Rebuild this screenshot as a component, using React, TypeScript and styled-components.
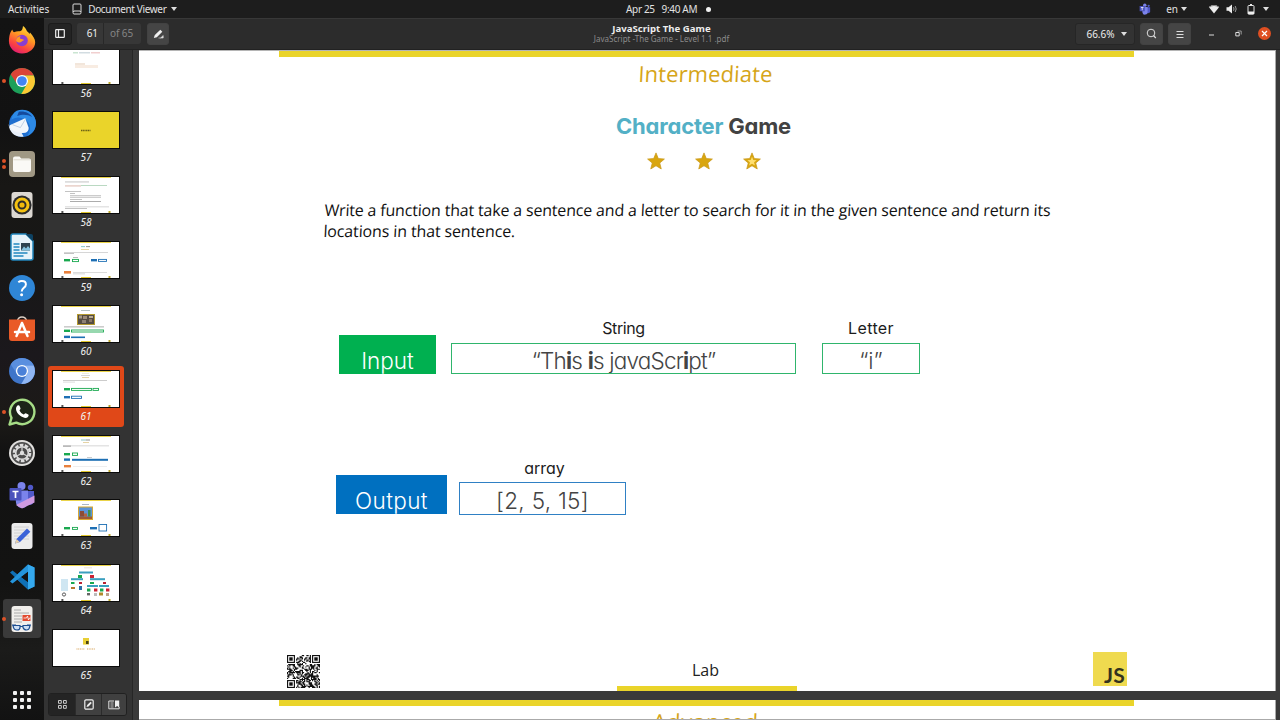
import React from "react";
import styled, { createGlobalStyle } from "styled-components";

const UI = `"Noto Sans", "Open Sans", sans-serif`;
const ERAS = `"Open Sans", "Noto Sans", sans-serif`;
const GOTHIC = `Inter, "Liberation Sans", sans-serif`;

const Global = createGlobalStyle`
  * { box-sizing: border-box; }
  body { margin: 0; overflow: hidden; background: #1d1d1d; }
  svg { display: block; flex: none; }
`;

const Desktop = styled.div`
  width: 1280px;
  height: 720px;
  display: grid;
  grid-template: 18px 702px / 44px 1236px;
  font-family: ${UI};
  overflow: hidden;
`;

/* ---------- top bar ---------- */
const TopBar = styled.header`
  grid-column: 1 / 3;
  display: flex;
  align-items: center;
  background: #1d1d1d;
  color: #e2e2e2;
  font-size: 10px;
  line-height: 18px;
  white-space: pre;
`;
const TopLeft = styled.div`
  width: 626px;
  padding-left: 8px;
  display: flex;
  align-items: center;
`;
const TopText = styled.span<{ $ls?: number; $ml?: number }>`
  letter-spacing: ${(p) => p.$ls ?? 0}px;
  margin-left: ${(p) => p.$ml ?? 0}px;
`;
const Caret = styled.i<{ $ml?: number }>`
  margin-left: ${(p) => p.$ml ?? 6}px;
  border: 3.2px solid transparent;
  border-top: 4px solid #dedede;
  border-bottom: 0;
`;
const Dot = styled.i`
  width: 5px;
  height: 5px;
  margin-left: 9px;
  border-radius: 50%;
  background: #f2f2f2;
`;
const Tray = styled.div`
  margin-left: auto;
  padding-right: 11px;
  display: flex;
  align-items: center;
`;
const TrayIcons = styled.div`
  margin: 0 8px 0 21px;
  display: flex;
  align-items: center;
  gap: 6px;
  svg + svg + svg { margin-left: 3px; }
`;

/* ---------- dock ---------- */
const DockBar = styled.nav`
  display: flex;
  flex-direction: column;
  align-items: center;
  padding-top: 1.5px;
  background: linear-gradient(#131313 0, #121212 16%, #181715 24%, #171716 34%, #1b181c 48%, #1c1a17 57%, #121212 62%, #131312 80%, #1b1b1a 90%, #121212 100%);
`;
const Slot = styled.div<{ $on?: boolean }>`
  position: relative;
  width: 38px;
  height: 39px;
  margin: 1.16px 0;
  display: grid;
  place-items: center;
  border-radius: 3px;
  background: ${(p) => (p.$on ? "#3a3a3a" : "transparent")};
`;
const Running = styled.span`
  position: absolute;
  left: -1px;
  top: 0;
  height: 100%;
  display: flex;
  flex-direction: column;
  justify-content: center;
  gap: 1.5px;
`;
const Pip = styled.i`
  width: 4px;
  height: 4px;
  border-radius: 50%;
  background: #dc5227;
`;
const Apps = styled.div`
  margin-top: auto;
  margin-bottom: 11px;
  display: grid;
  grid-template-columns: repeat(3, 4px);
  gap: 3px;
  i { width: 4px; height: 4px; border-radius: 1px; background: #f1f1f1; }
`;

/* ---------- window ---------- */
const Window = styled.main`
  display: grid;
  grid-template: 32px 670px / 88px 1148px;
`;
const HeaderBar = styled.div`
  grid-column: 1 / 3;
  display: grid;
  grid-template-columns: 1fr auto 1fr;
  align-items: center;
  background: #2c2c2c;
  border-top: 1px solid #383838;
  border-bottom: 1px solid #222;
  color: #eee;
`;
const Tools = styled.div<{ $end?: boolean }>`
  display: flex;
  align-items: center;
  justify-content: ${(p) => (p.$end ? "flex-end" : "flex-start")};
  padding: ${(p) => (p.$end ? "0 9px 1px 0" : "0 0 1px 4px")};
`;
const Tool = styled.button<{ $w: number; $dark?: boolean; $ml?: number }>`
  width: ${(p) => p.$w}px;
  height: 22px;
  margin: 0 0 0 ${(p) => p.$ml ?? 5}px;
  padding: 0;
  display: flex;
  align-items: center;
  justify-content: center;
  border: 1px solid ${(p) => (p.$dark ? "#1c1c1c" : "#424242")};
  border-radius: 3px;
  background: ${(p) => (p.$dark ? "#242424" : "#454545")};
  color: #eee;
  font: 10px/20px ${UI};
`;
const PageBox = styled.div`
  width: 64px;
  height: 21px;
  margin-left: 5px;
  display: flex;
  border-radius: 3px;
  background: #373737;
  color: #858585;
  font-size: 10px;
  line-height: 21px;
  overflow: hidden;
  letter-spacing: -0.1px;
`;
const PageNo = styled.span`
  width: 27px;
  padding-right: 5px;
  text-align: right;
  color: #eee;
  border-right: 1px solid #282828;
`;
const PageOf = styled.span`
  padding-left: 6px;
  white-space: pre;
`;
const ZoomBox = styled(Tool)`
  background: #333;
  border-color: #262626;
  padding-left: 3px;
`;
const Titles = styled.div`
  text-align: center;
  padding: 0 1px 1px 0;
`;
const WinTitle = styled.div`
  font-weight: 700;
  font-size: 9.6px;
  line-height: 11px;
  letter-spacing: 0.02px;
`;
const WinSub = styled.div`
  font-size: 8px;
  line-height: 10px;
  color: #8b8b8b;
  white-space: pre;
`;
const WinButton = styled.span<{ $ml: number; $close?: boolean }>`
  width: 13px;
  height: 13px;
  margin-left: ${(p) => p.$ml}px;
  display: grid;
  place-items: center;
  border-radius: 50%;
  background: ${(p) => (p.$close ? "#df4f22" : "transparent")};
`;

/* ---------- sidebar ---------- */
const Sidebar = styled.aside`
  display: flex;
  flex-direction: column;
  background: #333;
  height: 670px;
`;
const Thumbs = styled.div`
  height: 639px;
  overflow: hidden;
  padding: 0 8px 0 4px;
`;
const Cell = styled.figure<{ $on?: boolean }>`
  height: 60.7px;
  margin: 0 0 4px;
  padding-top: 4px;
  display: flex;
  flex-direction: column;
  align-items: center;
  border-radius: 3px;
  background: ${(p) => (p.$on ? "#e04818" : "transparent")};
  &:first-child { margin-top: -7.5px; }
  svg { border: 1px solid #0b0b0b; }
`;
const CellNo = styled.figcaption`
  margin-top: 1px;
  font: italic 10px/14px ${UI};
  color: #f0f0f0;
`;
const SideTabs = styled.div`
  height: 23px;
  margin: 4px 5px 0 4px;
  display: grid;
  grid-template-columns: 26px 26px 1fr;
  border: 1px solid #202020;
  border-radius: 3px;
  overflow: hidden;
`;
const SideTab = styled.button<{ $on?: boolean }>`
  display: grid;
  place-items: center;
  padding: 0;
  border: 0;
  border-left: ${(p) => (p.$on ? "0" : "1px solid #2b2b2b")};
  background: ${(p) => (p.$on ? "#242424" : "#404040")};
`;

/* ---------- document ---------- */
const Viewer = styled.section`
  height: 670px;
  padding-left: 6px;
  border-left: 1px solid #262626;
  background: #3a3a3a;
  overflow: hidden;
`;
const Page = styled.article<{ $h: number }>`
  width: 1137px;
  height: ${(p) => p.$h}px;
  padding: 0 141px 0 140px;
  display: flex;
  flex-direction: column;
  overflow: hidden;
  background: #fff;
  border-top: 1px solid #b5b5b5;
  border-right: 1px solid #aaa;
  & + & { margin-top: 9px; border-bottom: 1px solid #aaa; border-top: 0; }
`;
const Stripe = styled.div`
  flex: none;
  width: 855px;
  height: 6px;
  background: #ead42a;
`;
const Level = styled.div<{ $mt: number; $ls?: number }>`
  margin-top: ${(p) => p.$mt}px;
  height: 24px;
  flex: none;
  text-align: center;
  padding-right: 2px;
  font: 400 22px/24px ${ERAS};
  letter-spacing: ${(p) => p.$ls ?? 0}px;
  color: #d6a518;
  transform: skewX(-3deg);
`;
const Heading = styled.h1`
  margin: 27px 0 0;
  padding-right: 6px;
  text-align: center;
  font: 700 22px/28px ${GOTHIC};
  font-feature-settings: "cv11";
  letter-spacing: -0.2px;
  color: #424242;
  span { color: #53b0c6; }
`;
const Stars = styled.div`
  margin-top: 11px;
  padding-right: 5px;
  display: flex;
  justify-content: center;
  gap: 30px;
  height: 20px;
  align-items: center;
`;
const Prompt = styled.p`
  margin: 29px 0 0;
  padding-left: 45px;
  font: 400 16px/20.5px ${ERAS};
  color: #111;
  white-space: nowrap;
  transform: skewX(-3deg);
`;
const Line = styled.span<{ $ls: number }>`
  display: block;
  letter-spacing: ${(p) => p.$ls}px;
`;
const IORow = styled.div<{ $mt: number; $ml: number; $gap: number }>`
  margin: ${(p) => p.$mt}px 0 0 ${(p) => p.$ml}px;
  display: flex;
  align-items: flex-end;
  gap: ${(p) => p.$gap}px;
`;
const Tag = styled.div<{ $w: number; $c: string; $ls?: number; $mb?: number }>`
  width: ${(p) => p.$w}px;
  height: 39px;
  margin-bottom: ${(p) => p.$mb ?? 0}px;
  padding-top: 11px;
  overflow: hidden;
  background: ${(p) => p.$c};
  color: #fff;
  text-align: center;
  font: 300 22.5px/30px ${GOTHIC};
  letter-spacing: ${(p) => p.$ls ?? 0}px;
`;
const Field = styled.div<{ $ml?: number }>`
  margin-left: ${(p) => p.$ml ?? 0}px;
  text-align: center;
`;
const Caption = styled.div<{ $ls?: number; $pl?: number }>`
  height: 20px;
  padding-left: ${(p) => p.$pl ?? 0}px;
  font: 400 16px/20px ${GOTHIC};
  font-feature-settings: "cv11";
  letter-spacing: ${(p) => p.$ls ?? 0}px;
  color: #1c1c1c;
`;
const Value = styled.div<{ $w: number; $h: number; $c: string; $ls?: number; $mt: number; $lh?: number }>`
  width: ${(p) => p.$w}px;
  height: ${(p) => p.$h}px;
  margin-top: ${(p) => p.$mt}px;
  border: 1px solid ${(p) => p.$c};
  overflow: hidden;
  font: 300 22.5px/${(p) => p.$lh ?? 33}px ${GOTHIC};
  font-feature-settings: "cv11";
  letter-spacing: ${(p) => p.$ls ?? 0}px;
  color: #444;
  white-space: pre;
  b { font-weight: 700; }
`;
const Footer = styled.footer`
  margin-top: auto;
  display: grid;
  grid-template-columns: 338px 180px 1fr;
  align-items: end;
`;
const QrWrap = styled.div`
  padding: 0 0 3px 8px;
`;
const Lab = styled.div`
  text-align: center;
  font: 400 16px/20px ${ERAS};
  color: #222;
  padding: 0 3px 5px 0;
  height: 31px;
  box-shadow: inset 0 -5px #ead42a;
`;
const JsLogo = styled.div`
  justify-self: end;
  width: 34px;
  height: 34px;
  margin: 0 7px 5px 0;
  padding: 11px 2px 0 0;
  background: #efda4f;
  color: #33321e;
  text-align: right;
  font: 700 21px/24px Lato, sans-serif;
  letter-spacing: 0.2px;
`;

/* ---------- drawings ---------- */
const STAR = "M12 1.2l3.1 7.6 8.1.6-6.2 5.3 2 7.9-7-4.3-7 4.3 2-7.9L.8 9.4l8.1-.6z";
const Star = ({ light }: { light?: boolean }) => (
  <svg width="18" height="18" viewBox="0 0 24 24">
    <path d={STAR} fill="#d9a60f" stroke="#c99a1c" strokeWidth="1" strokeLinejoin="round" />
    {light && <path d={STAR} fill="#ffdf70" transform="translate(12 12.6) scale(.55) translate(-12 -12.6)" />}
  </svg>
);

const QN = 29;
const inFinder = (x: number, y: number) => (x < 8 && y < 8) || (x > QN - 9 && y < 8) || (x < 8 && y > QN - 9);
const modules: string[] = [];
for (let y = 0, s = 77; y < QN; y++)
  for (let x = 0; x < QN; x++) {
    s = (s * 1103515245 + 12345) % 2147483648;
    if (!inFinder(x, y) && (s >> 12) % 100 < 53) modules.push(`M${x} ${y}h1.05v1.05h-1.05z`);
  }
const Qr = () => (
  <svg width="33" height="33" viewBox="0 0 29 29">
    <path d={modules.join("")} fill="#111" />
    {[[0, 0], [22, 0], [0, 22]].map(([x, y]) => (
      <g key={`${x}-${y}`} transform={`translate(${x} ${y})`}>
        <rect x=".5" y=".5" width="6" height="6" fill="none" stroke="#111" />
        <rect x="2" y="2" width="3" height="3" fill="#111" />
      </g>
    ))}
  </svg>
);

type R = [number, number, number, number, string];
const G = "#19a84f";
const B = "#1d6fb4";
const O = "#e8803c";
const thumbArt: Record<number, R[]> = {
  56: [[20, 4.6, 5, 0.6, "#7bbf8e"], [26, 4.6, 11, 0.6, "#8fa8b4"], [38, 4.6, 9, 0.6, "#d88"], [22, 15.5, 10, 1, "#e5cdb8"], [22, 17, 23, 3, "#f8ece2"]],
  57: [],
  58: [[12, 4.6, 24, 0.7, "#aaa"], [12, 8.6, 16, 0.7, "#c98"], [28, 8.3, 26, 0.7, "#9cc9a8"], [12, 14, 16, 0.7, "#aaa"], [17, 16, 5, 0.6, "#999"], [17, 18.5, 31, 0.7, "#999"], [17, 20.3, 31, 0.7, "#bbb"], [17, 22, 12, 0.7, "#aaa"], [17, 24, 31, 0.7, "#888"], [12, 29.6, 44, 0.6, "#bbb"], [12, 31, 22, 0.6, "#999"]],
  59: [[28, 4.3, 4, 0.8, "#6bb"], [33, 4.3, 4, 0.8, "#777"], [28, 7, 8, 0.5, "#caa84a"], [11, 10, 44, 0.6, "#bbb"], [11, 11.4, 10, 0.6, "#999"], [11, 17, 6, 2.4, G], [20, 15, 5, 0.6, "#888"], [38, 17, 6, 2.4, B], [11, 29, 7, 2.6, O], [20, 30, 34, 0.7, "#ccc"], [20, 31.6, 12, 0.6, "#bbb"]],
  60: [[28, 4, 9, 0.7, "#9aa"], [24, 8, 18, 11, "#b59a30"], [25, 9, 16, 9, "#544c42"], [26, 9.5, 3, 3, "#a59a86"], [30, 10, 4, 3, "#9b8a78"], [29, 14, 4, 3, "#8d8074"], [36, 10, 4, 2, "#b7aa94"], [36, 13, 3, 3, "#8b7765"], [11, 20.5, 40, 0.8, "#999"], [11, 23.6, 6, 2.4, G], [11, 29.7, 6, 2.4, B], [18, 30.5, 14, 1.6, B]],
  61: [[29, 2, 7, 0.5, "#ddb"], [28, 4.4, 9, 0.6, "#bbb"], [29, 6, 7, 0.5, "#cba84c"], [10, 9.3, 44, 0.6, "#aaa"], [10, 10.8, 12, 0.5, "#bbb"], [11, 17, 6, 2.4, G], [11, 25, 6, 2.4, B]],
  62: [[28, 3.6, 5, 0.8, "#7bb"], [33, 3.6, 4, 0.8, "#777"], [30, 6, 6, 0.5, "#caa84a"], [10, 9.6, 8, 0.9, "#777"], [18, 9.6, 38, 0.6, "#bbb"], [11, 17, 6, 2.4, G], [11, 22.4, 6, 2.4, B], [19, 22.8, 36, 2, B], [34, 21, 5, 0.5, "#999"], [11, 29, 7, 2.4, O], [20, 30.3, 34, 0.5, "#ddd"]],
  63: [[29, 4, 7, 0.7, "#89a"], [25, 6.5, 15, 13.5, "#d8a832"], [26, 7.5, 13, 11.5, "#5c93d6"], [26, 16.5, 13, 2.5, "#a05a34"], [27, 11, 4, 5.5, "#8c4c36"], [31, 13.500, 3, 3, "#b5643c"], [35, 10, 2.500, 6.5, "#3f8f4a"], [11, 27, 6, 2.4, G], [37, 27, 7, 2.4, B]],
  64: [[31, 2.6, 8, 0.6, "#dcb"], [26, 6.5, 14, 2, "#3a9fbf"], [8, 14, 7, 12, "#cfe6f2"], [25, 10, 4, 3, G], [37, 10, 4, 3, "#c23"], [18, 13.2, 12, 2, "#3a9fbf"], [37, 13.2, 15, 2, "#3a9fbf"], [18, 17, 3.5, 2, G], [26, 17, 3, 2, "#b23"], [37, 17, 4, 2, G], [50, 17, 3, 2, "#b23"], [34, 20, 11, 2, "#3a9fbf"], [46, 20, 10, 2, "#3a9fbf"], [18, 22, 4, 2, "#b7762e"], [26, 21, 3, 4, "#2a6fa8"], [34, 23.5, 3.4, 3, G], [41, 23.5, 3.4, 3, "#c23"], [47, 23.5, 3.4, 3, G], [53, 23.5, 3.4, 3, "#c23"], [34, 28, 3, 2.4, "#666"], [41, 28, 3, 3, "#bbb"], [46, 27.5, 4, 3, "#b08a2a"], [53, 28, 3, 3, "#b9a08a"]],
  65: [[30, 8, 6, 6.6, "#e8cf35"], [33, 11, 2.6, 3, "#4c4512"]],
};
const thumbBoxes: Record<number, R[]> = {
  59: [[19.5, 17.4, 6, 2.2, G], [45.5, 17.4, 8, 2, B]],
  60: [[18.5, 24, 32, 2, G]],
  61: [[18.5, 17.4, 20, 2, G], [40, 17.4, 5.5, 2, G], [18.5, 25.2, 10, 2.2, B]],
  62: [[19.5, 17, 5, 2.4, G]],
  63: [[19.5, 27.4, 5, 2, G], [46, 24.5, 7.6, 6.5, B]],
};
const Thumb = ({ n }: { n: number }) => (
  <svg width="68" height="38" viewBox="0 0 66 36">
    <rect width="66" height="36" fill={n === 57 ? "#ead42a" : "#fff"} />
    {n !== 57 && n !== 65 && (
      <>
        <rect x="8" width="50" height=".9" fill="#e8cf35" />
        <rect x="28" y="35" width="10" height="1" fill="#e0c62c" />
        <rect x="8.4" y="34" width="2" height="2" fill="#555" />
        <rect x="55.5" y="34" width="2" height="2" fill="#bba528" />
      </>
    )}
    {n === 57 && <path d="M28 18.5h9.5" stroke="#6b6015" strokeWidth="1.3" strokeDasharray="1.2 .5" />}
    {n === 65 && <path d="M23.5 19h8.5M34 19h8" stroke="#e3c08d" strokeWidth="1.7" strokeDasharray="1 .7" />}
    {n === 64 && <circle cx="11" cy="29.5" r="1.6" fill="none" stroke="#333" strokeWidth=".8" />}
    {(thumbArt[n] ?? []).map(([x, y, w, h, c], i) => (
      <rect key={i} x={x} y={y} width={w} height={h} fill={c} />
    ))}
    {(thumbBoxes[n] ?? []).map(([x, y, w, h, c], i) => (
      <rect key={i} x={x} y={y} width={w} height={h} fill="#fff" stroke={c} strokeWidth=".9" />
    ))}
  </svg>
);

const Svg = ({ children, s = 28 }: { children: React.ReactNode; s?: number }) => (
  <svg width={s} height={s} viewBox="0 0 28 28">{children}</svg>
);
const Firefox = () => (
  <Svg>
    <defs>
      <linearGradient id="ff" x1=".8" y1="0" x2=".3" y2="1">
        <stop offset="0" stopColor="#ffe93f" /><stop offset=".4" stopColor="#ff9a22" /><stop offset=".75" stopColor="#fb4440" /><stop offset="1" stopColor="#e01c72" />
      </linearGradient>
    </defs>
    <path d="M1.4 10C2 7 3 5 4.4 3.4c.2 1.400.7 2.200 1.600 2.800 2-1 4-1.200 6-.9 1.800-.3 2.600-2 3-5.300 1.800 1.200 3.200 3 4 5.200 1.200.8 2 1.800 2.400 2.800l.6-1.400c3 3.400 5.200 6.400 5.200 9.600C27.200 22.400 21.200 27.500 14 27.500S.9 22 .9 15c0-1.800.2-3.300.5-5z" fill="url(#ff)" />
    <circle cx="14" cy="14.500" r="5.800" fill="#8a3ed0" />
    <path d="M8 15c0-3 2-4.800 5-5-1.400 1-1.600 2-.4 2.800 1.200.7 3 .2 3.400 1.400-2 .6-2.600 2.500-5 2.300-1.400-.2-2-.8-3-1.500z" fill="#ff9a22" />
  </Svg>
);
const Wheel = ({ a, b, c, core }: { a: string; b: string; c: string; core: string }) => (
  <Svg>
    <circle cx="14" cy="14" r="13" fill={b} />
    <path d="M2.740 7.500A13 13 0 0 1 25.260 7.500L25.700 8.400H14A5.800 5.800 0 0 0 8.900 16.800z" fill={a} />
    <path d="M25.700 8.400A13 13 0 0 1 13.300 27L19.100 16.900A5.800 5.800 0 0 0 14 8.400z" fill={c} />
    <circle cx="14" cy="14" r="6.100" fill="#fff" />
    <circle cx="14" cy="14" r="4.800" fill={core} />
  </Svg>
);
const Thunderbird = () => (
  <Svg s={30}>
    <circle cx="14.500" cy="14.500" r="12.500" fill="#1f6fd0" />
    <path d="M9 2.600C17-.5 26 4 27 13c.4 6-3 11-8 13 4-6 3-12-2-15S9 8 4 11C5 7 6 4 9 2.600z" fill="#2d8ae6" />
    <path d="M11 3.500c5-1 10 1 12.500 5-4-2-8-3-14-1z" fill="#154a9c" />
    <path d="M2.500 16L17 9.500l3.200 9c.3 2-1 4-3 4.500L8 24l-5-4z" fill="#f3f6fb" />
    <path d="M5 15.500l7.500 2.800L17.500 10" fill="none" stroke="#b9c9df" strokeWidth=".8" />
    <path d="M1.500 15c2 6 6 8 12 8l2 3.600C8 28 2 23 1.500 15z" fill="#e9f0fa" />
  </Svg>
);
const Files = () => (
  <Svg><rect x="1" y="1" width="26" height="26" rx="4" fill="#a09884" /><path d="M5 8.500q0-2 2-2h4.500l1.700 2H21q2 0 2 2V20q0 2-2 2H7q-2 0-2-2z" fill="#faf9f6" /><path d="M5.500 9.800h17" stroke="#dedad0" /></Svg>
);
const Rhythm = () => (
  <Svg><rect x="3.500" y="1" width="21" height="26" rx="3" fill="#dcd8d2" /><circle cx="14" cy="14" r="9.600" fill="#2b2b2b" /><circle cx="14" cy="14" r="6" fill="none" stroke="#f5c211" strokeWidth="3" /><circle cx="14" cy="14" r="2.600" fill="#f0b90b" /></Svg>
);
const Writer = () => (
  <Svg><path d="M5 1h13l7 7v17q0 2-2 2H5q-2 0-2-2V3q0-2 2-2z" fill="#e6f3fa" stroke="#2287bd" strokeWidth="1.500" /><path d="M17.500 1L25 8.500V3q0-2-2-2z" fill="#0d4161" /><path d="M5.500 11h6M5.500 14h6M5.500 17h6M5.500 20h14M5.500 23h10" stroke="#2288c0" strokeWidth="1.600" /><path d="M13 10h9v7.500h-9z" fill="#2c4350" /><path d="M13 17.500l3-4 2 2 2-2.500 2 2.500v2z" fill="#83c3e0" /></Svg>
);
const Help = () => (
  <Svg><circle cx="14" cy="14" r="13" fill="#2f86d6" /><path d="M10.300 8.200c1-.8 2.200-1.200 3.600-1.200 2.600 0 4 1.400 4 3.400 0 3.300-4.200 3.600-4.200 7.100" fill="none" stroke="#fff" strokeWidth="2" /><circle cx="13.600" cy="20.800" r="1.500" fill="#fff" /></Svg>
);
const Software = () => (
  <Svg><path d="M9.500 6.500c0-6 9-6 9 0" fill="none" stroke="#dcd0c6" strokeWidth="1.600" /><path d="M1 4.500h26V23q0 3-3 3H4q-3 0-3-3z" fill="#e95a27" /><path d="M14 8l-5.500 13M14 8l5.500 13M7 17h14" stroke="#fff" strokeWidth="2.500" fill="none" strokeLinecap="round" /></Svg>
);
const WhatsApp = () => (
  <Svg><path d="M1.500 26.500l2-6.700A12.200 12.200 0 1 1 8.300 24.600z" fill="#1c2418" stroke="#a6dc86" strokeWidth="2.400" strokeLinejoin="round" /><path d="M9.500 7.500c.8-.6 1.700-.4 2 .3l1 2.400c.3.8-1 1.600-1 2.200.9 1.900 2.300 3.200 4.200 4 .7 0 1.400-1.500 2.100-1.200l2.500 1.300c.7.4.3 2-.7 2.800-1.800 1.300-4.600.4-7-1.200-2.700-1.900-4.600-4.600-4.600-7 0-1.500.6-2.800 1.500-3.600z" fill="#fff" /></Svg>
);
const Settings = () => (
  <Svg><circle cx="14" cy="14" r="13" fill="#e2e1df" /><circle cx="14" cy="14" r="11" fill="#4c4c4c" /><circle cx="14" cy="14" r="8" fill="none" stroke="#dedede" strokeWidth="2.600" strokeDasharray="3.600 1.430" /><circle cx="14" cy="14" r="6.300" fill="none" stroke="#dedede" strokeWidth="1.600" /><path d="M14 14V8M14 14l-5 3M14 14l5 3" stroke="#cfcfcf" strokeWidth="1.300" /><circle cx="14" cy="14" r="2.200" fill="#dedede" /></Svg>
);
const Teams = ({ s = 28 }: { s?: number }) => (
  <Svg s={s}><circle cx="13.500" cy="5" r="4" fill="#7b83eb" /><circle cx="22.500" cy="6.500" r="2.700" fill="#5059c9" /><path d="M17 10h9v9q0 5-5 5h-4z" fill="#5059c9" /><path d="M7 9.500h13V20a6 6 0 0 1-12 2z" fill="#7b83eb" /><rect x="1.500" y="7" width="12" height="12.500" rx="1" fill="#4b53bc" /><path d="M4.500 10.500h6M7.500 10.500v6.500" stroke="#fff" strokeWidth="1.700" />{s > 20 && <path d="M8 24L26.500 14.500v7L14 27.500z" fill="#cf9ae0" />}</Svg>
);
const Editor = () => (
  <Svg><rect x="3.500" y="1" width="21" height="26" rx="3" fill="#ececec" /><path d="M6 5h15M6 8h15M6 11h14M6 14h15M6 17h15" stroke="#ccc" strokeWidth=".8" /><path d="M7 21.500l1.500-4.500L19 6.500l3.300 3.300L12 20z" fill="#3b63d8" /><path d="M7 21.500l1.500-4.500 3.200 3z" fill="#e7cfa6" /></Svg>
);
const Code = () => (
  <Svg><path d="M20 1.500l6.500 3v19l-6.500 3L6.500 14z" fill="#1f8ad2" /><path d="M20 8.500v11L12.500 14z" fill="#131313" /><path d="M2 9.500L4.500 7.500 20 19.500v7z" fill="#0f70b6" /><path d="M2 18.500l2.500 2L20 8.500v-7z" fill="#2595dc" /><path d="M20 1.500l6.500 3v19l-6.500 3z" fill="#35a9ee" /></Svg>
);
const Evince = () => (
  <Svg><rect x="3.500" y="1" width="21" height="26" rx="3" fill="#f1efec" /><path d="M6 5h7M6 8h15M6 11h8M6 14h8M6 17h8" stroke="#aaa" /><rect x="14.500" y="10" width="8" height="6" fill="#e2492f" /><path d="M15.500 13h3l1-2 1 4 1-2h1" stroke="#fff" strokeWidth=".8" fill="none" /><path d="M5 20.500h7v2q0 2.500-3 2.500t-3.500-2.500zM15 20.500h7l-.5 2q-.5 2.500-3 2.500t-3.500-2.500zM12 21.500h3M4 20h4M19 20h4" fill="#cfe0f4" stroke="#1f4f91" strokeWidth="1.200" /></Svg>
);

const dock: [string, React.ReactNode, number][] = [
  ["firefox", <Firefox />, 0],
  ["chrome", <Wheel a="#db4437" b="#1da05a" c="#fcc934" core="#4285f4" />, 1],
  ["mail", <Thunderbird />, 0],
  ["files", <Files />, 2],
  ["music", <Rhythm />, 0],
  ["writer", <Writer />, 0],
  ["help", <Help />, 0],
  ["software", <Software />, 0],
  ["chromium", <Wheel a="#5a8fdf" b="#3f75c9" c="#90b6f3" core="#4a80d8" />, 0],
  ["whatsapp", <WhatsApp />, 1],
  ["settings", <Settings />, 0],
  ["teams", <Teams />, 0],
  ["editor", <Editor />, 0],
  ["code", <Code />, 0],
  ["viewer", <Evince />, 1],
];

export default function App() {
  return (
    <Desktop>
      <Global />
      <TopBar>
        <TopLeft>
          <TopText $ls={-0.05}>Activities</TopText>
          <svg width="10" height="12" viewBox="0 0 10 12" transform="translate(23 0)">
            <path d="M1 9V2q0-1 1-1h6q1 0 1 1v7M1 9.500q0 1.500 1 1.500h6q1 0 1-1.500L8 8H2z" fill="none" stroke="#ddd" />
          </svg>
          <TopText $ml={29} $ls={-0.34}>Document Viewer</TopText>
          <Caret $ml={4.5} />
        </TopLeft>
        <TopText $ls={-0.33}>Apr 25   9:40 AM</TopText>
        <Dot />
        <Tray>
          <Teams s={12} />
          <TopText $ml={15}>en</TopText>
          <Caret $ml={3} />
          <TrayIcons>
            <svg width="12" height="10" viewBox="0 0 12 10"><path d="M.8 3Q6-1.200 11.200 3L6 9.500z" fill="#eee" /><path d="M1.300 3.300Q6-.4 10.700 3.300" fill="none" stroke="#888" /></svg>
            <svg width="12" height="10" viewBox="0 0 12 10"><path d="M.5 3.300h2L6 .5v9L2.500 6.700h-2z" fill="#eee" /><path d="M7.500 3.200q1 1.800 0 3.600M9.200 2q2 3 0 6" fill="none" stroke="#999" /></svg>
            <svg width="8" height="11" viewBox="0 0 8 11"><path d="M3 0h2v1.500H3z" fill="#eee" /><rect x="1" y="1.500" width="6" height="8.700" rx=".8" fill="none" stroke="#e5e5e5" /><path d="M1 7.500h6V10H1z" fill="#eee" /></svg>
          </TrayIcons>
          <Caret $ml={0} />
        </Tray>
      </TopBar>

      <DockBar>
        {dock.map(([name, icon, pips]) => (
          <Slot key={name} $on={name === "viewer"}>
            {icon}
            {pips > 0 && <Running>{Array.from({ length: pips }, (_, i) => <Pip key={i} />)}</Running>}
          </Slot>
        ))}
        <Apps>{Array.from({ length: 9 }, (_, i) => <i key={i} />)}</Apps>
      </DockBar>

      <Window>
        <HeaderBar>
          <Tools>
            <Tool $w={24} $dark $ml={0}>
              <svg width="10" height="9" viewBox="0 0 10 9"><rect x=".7" y=".7" width="8.600" height="7.600" rx=".6" fill="none" stroke="#eee" strokeWidth="1.200" /><path d="M3.500 1v7" stroke="#eee" strokeWidth="1.200" /></svg>
            </Tool>
            <PageBox><PageNo>61</PageNo><PageOf>of 65</PageOf></PageBox>
            <Tool $w={22} $ml={6}>
              <svg width="11" height="10" viewBox="0 0 11 10"><path d="M.8 9l1-3L7.300.8l2 2L3.800 8.200z" fill="#f0f0f0" /><path d="M5.500 9h4.700V6.500L7.500 9" fill="#ddd" stroke="#ddd" strokeWidth=".6" /></svg>
            </Tool>
          </Tools>
          <Titles>
            <WinTitle>JavaScript The Game</WinTitle>
            <WinSub>JavaScript -The Game - Level 1.1 .pdf</WinSub>
          </Titles>
          <Tools $end>
            <ZoomBox $w={60}>66.6%<Caret /></ZoomBox>
            <Tool $w={23}>
              <svg width="11" height="11" viewBox="0 0 11 11"><circle cx="5" cy="5" r="3.800" fill="none" stroke="#ddd" /><path d="M7.500 7.500l2.300 2.500" stroke="#ddd" strokeWidth="1.200" /></svg>
            </Tool>
            <Tool $w={23}>
              <svg width="8" height="8" viewBox="0 0 8 8"><path d="M.5 1.500h7M.5 4.500h7M.5 7.500h7" stroke="#ddd" strokeWidth="1" /></svg>
            </Tool>
            <WinButton $ml={14}><svg width="5" height="5" viewBox="0 0 5 5"><path d="M0 4h5" stroke="#aaa" strokeWidth="1.400" /></svg></WinButton>
            <WinButton $ml={14}><svg width="7" height="7" viewBox="0 0 7 7"><path d="M.8 2.500h3.400v3.400H.8z" fill="none" stroke="#ddd" /><path d="M2.500 1h3.700v3.500" fill="none" stroke="#999" /></svg></WinButton>
            <WinButton $ml={13} $close><svg width="7" height="7" viewBox="0 0 7 7"><path d="M1 1l5 5M6 1L1 6" stroke="#fff" strokeWidth="1.200" /></svg></WinButton>
          </Tools>
        </HeaderBar>

        <Sidebar>
          <Thumbs>
            {[56, 57, 58, 59, 60, 61, 62, 63, 64, 65].map((n) => (
              <Cell key={n} $on={n === 61}><Thumb n={n} /><CellNo>{n}</CellNo></Cell>
            ))}
          </Thumbs>
          <SideTabs>
            <SideTab $on><svg width="9" height="9" viewBox="0 0 9 9"><path d="M.5.500h2.800v2.800H.5zM5.500.500h2.800v2.800H5.500zM.5 5.500h2.800v2.800H.5zM5.500 5.500h2.800v2.800H5.500z" fill="none" stroke="#ddd" strokeWidth=".9" /></svg></SideTab>
            <SideTab><svg width="10" height="11" viewBox="0 0 10 11"><rect x=".8" y=".8" width="8.400" height="9.400" rx="1.200" fill="none" stroke="#eee" strokeWidth="1.200" /><path d="M2.500 8l.7-2L6.500 2.800l1.300 1.300L4.500 7.500z" fill="#eee" /></svg></SideTab>
            <SideTab><svg width="12" height="10" viewBox="0 0 12 10"><path d="M6 1H.8v7.800h10.400V7" fill="none" stroke="#ddd" /><path d="M2.500 3h3M2.500 5h3M2.500 7h3" stroke="#ddd" strokeWidth=".8" /><path d="M7 .5h4.200v7L9.100 6 7 7.500z" fill="#eee" /></svg></SideTab>
          </SideTabs>
        </Sidebar>

        <Viewer>
          <Page $h={641}>
            <Stripe />
            <Level $mt={4} $ls={0.1}>Intermediate</Level>
            <Heading><span>Character</span> Game</Heading>
            <Stars><Star /><Star /><Star light /></Stars>
            <Prompt>
              <Line $ls={-0.18}>Write a function that take a sentence and a letter to search for it in the given sentence and return its</Line>
              <Line $ls={-0.13}>locations in that sentence.</Line>
            </Prompt>
            <IORow $mt={77} $ml={60} $gap={15}>
              <Tag $w={97} $c="#00b050">Input</Tag>
              <Field><Caption $ls={-0.4}>String</Caption><Value $w={345} $h={31} $mt={5} $c="#2fb56c" $ls={-0.8}>“Th<b>i</b>s <b>i</b>s javaScr<b>i</b>pt”</Value></Field>
              <Field $ml={11}><Caption $ls={0.4}>Letter</Caption><Value $w={98} $h={31} $mt={5} $c="#2fb56c">“i”</Value></Field>
            </IORow>
            <IORow $mt={84} $ml={57} $gap={12}>
              <Tag $w={111} $c="#0070c0" $mb={1} $ls={0.4}>Output</Tag>
              <Field><Caption $pl={4}>array</Caption><Value $w={167} $h={33} $mt={4} $c="#2f80c4" $ls={0.3} $lh={36}>[2, 5, 15]</Value></Field>
            </IORow>
            <Footer>
              <QrWrap><Qr /></QrWrap>
              <Lab>Lab</Lab>
              <JsLogo>JS</JsLogo>
            </Footer>
          </Page>
          <Page $h={20}>
            <Stripe />
            <Level $mt={3} $ls={0.7}>Advanced</Level>
          </Page>
        </Viewer>
      </Window>
    </Desktop>
  );
}
